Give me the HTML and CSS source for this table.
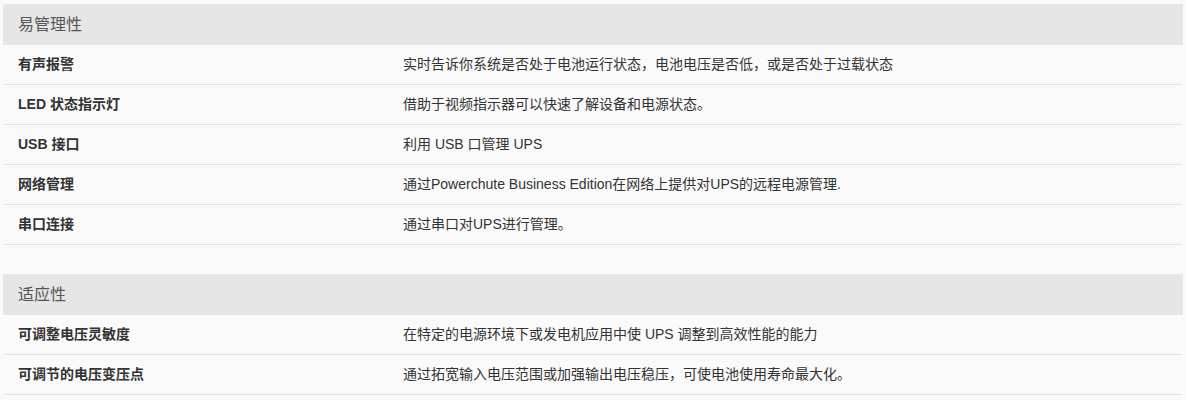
FILE: index.html
```html
<!DOCTYPE html>
<html lang="zh-CN">
<head>
<meta charset="utf-8">
<link rel="stylesheet" href="styles.css">
</head>
<body>
<div class="spec">
  <section class="group">
    <div class="group-title">易管理性</div>
    <div class="row"><div class="label">有声报警</div><div class="value">实时告诉你系统是否处于电池运行状态，电池电压是否低，或是否处于过载状态</div></div>
    <div class="row"><div class="label">LED 状态指示灯</div><div class="value">借助于视频指示器可以快速了解设备和电源状态。</div></div>
    <div class="row"><div class="label">USB 接口</div><div class="value">利用 USB 口管理 UPS</div></div>
    <div class="row"><div class="label">网络管理</div><div class="value">通过Powerchute Business Edition在网络上提供对UPS的远程电源管理.</div></div>
    <div class="row"><div class="label">串口连接</div><div class="value">通过串口对UPS进行管理。</div></div>
  </section>
  <section class="group">
    <div class="group-title">适应性</div>
    <div class="row"><div class="label">可调整电压灵敏度</div><div class="value">在特定的电源环境下或发电机应用中使 UPS 调整到高效性能的能力</div></div>
    <div class="row"><div class="label">可调节的电压变压点</div><div class="value">通过拓宽输入电压范围或加强输出电压稳压，可使电池使用寿命最大化。</div></div>
  </section>
</div>
</body>
</html>
```
FILE: styles.css
```css
html, body {
  margin: 0;
  padding: 0;
  background: #fafafa;
}
body {
  font-family: "Liberation Sans", "Noto Sans CJK SC", sans-serif;
  color: #333;
}
.spec {
  width: 1180px;
  margin: 4px 0 0 3px;
  display: flex;
  flex-direction: column;
  gap: 29px;
}
.group-title {
  height: 41px;
  background: #e6e6e6;
  display: flex;
  align-items: center;
  padding: 0 0 3px 15px;
  box-sizing: border-box;
  font-size: 16px;
  color: #555;
}
.row {
  box-sizing: border-box;
  height: 40px;
  margin: 0 1px;
  padding-bottom: 3px;
  border-bottom: 1px solid #e2e2e2;
  display: grid;
  grid-template-columns: 384px 1fr;
  align-items: center;
  font-size: 14px;
}
.label {
  padding-left: 14px;
  font-weight: bold;
  color: #333;
}
.value {
  padding-left: 15px;
  color: #333;
}
```
